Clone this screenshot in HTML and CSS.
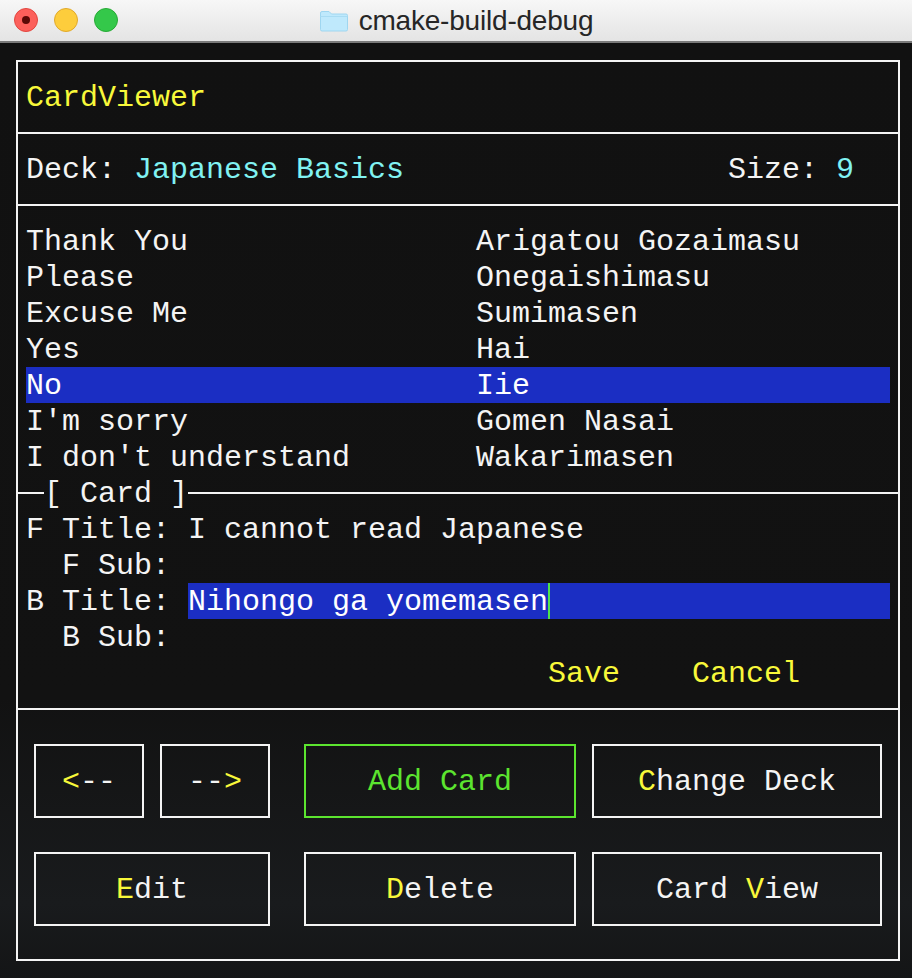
FILE: index.html
```html
<!DOCTYPE html>
<html>
<head>
<meta charset="utf-8">
<title>cmake-build-debug</title>
<link rel="stylesheet" href="styles.css">
</head>
<body>
<div class="window">
  <header class="titlebar">
    <div class="lights">
      <span class="light red"><i class="dot"></i></span>
      <span class="light yellow"></span>
      <span class="light green"></span>
    </div>
    <div class="title">
      <svg class="folder" width="30" height="22" viewBox="0 0 30 22">
        <path d="M1.5 3 Q1.5 1.5 3 1.5 H10 L12.5 4 H27 Q28.5 4 28.5 5.5 V19.5 Q28.5 21 27 21 H3 Q1.5 21 1.5 19.5 Z" fill="#bfe9fc" stroke="#9fd6f0" stroke-width="1"/>
        <path d="M1.5 6.5 H28.5" stroke="#a9dcf3" stroke-width="1"/>
      </svg>
      <span class="title-text">cmake-build-debug</span>
    </div>
  </header>
  <main class="term">
    <div class="frame">
      <section class="sec sec-title"><span class="yel">CardViewer</span></section>
      <section class="sec sec-deck">
        <span>Deck: <span class="cyan">Japanese Basics</span></span>
        <span>Size: <span class="cyan">9</span></span>
      </section>
      <section class="sec sec-list">
        <div class="item"><span class="front">Thank You</span><span>Arigatou Gozaimasu</span></div>
        <div class="item"><span class="front">Please</span><span>Onegaishimasu</span></div>
        <div class="item"><span class="front">Excuse Me</span><span>Sumimasen</span></div>
        <div class="item"><span class="front">Yes</span><span>Hai</span></div>
        <div class="item selected"><span class="front">No</span><span>Iie</span></div>
        <div class="item"><span class="front">I'm sorry</span><span>Gomen Nasai</span></div>
        <div class="item"><span class="front">I don't understand</span><span>Wakarimasen</span></div>
      </section>
      <div class="legend"><span class="rule lead"></span><span class="legend-text">[ Card ]</span><span class="rule fill"></span></div>
      <section class="sec-card">
        <div class="field"><span class="label">F Title: </span><span class="value">I cannot read Japanese</span></div>
        <div class="field"><span class="label">  F Sub: </span><span class="value"></span></div>
        <div class="field"><span class="label">B Title: </span><span class="value input"><span class="typed">Nihongo ga yomemasen</span><span class="cursor"></span></span></div>
        <div class="field"><span class="label">  B Sub: </span><span class="value"></span></div>
        <div class="actions"><span class="yel">Save</span><span class="yel">Cancel</span></div>
      </section>
      <section class="sec-buttons">
        <div class="btn b-prev"><span class="yel">&lt;</span>--</div>
        <div class="btn b-next">--<span class="yel">&gt;</span></div>
        <div class="btn b-add focused">Add Card</div>
        <div class="btn b-deck"><span class="yel">C</span>hange Deck</div>
        <div class="btn b-edit"><span class="yel">E</span>dit</div>
        <div class="btn b-del"><span class="yel">D</span>elete</div>
        <div class="btn b-view">Card <span class="yel">V</span>iew</div>
      </section>
    </div>
  </main>
</div>
</body>
</html>
```

FILE: styles.css
```css
* { box-sizing: border-box; }
html, body {
  margin: 0;
  padding: 0;
  width: 912px;
  height: 978px;
  overflow: hidden;
  background: #121212;
}
.window {
  width: 912px;
  height: 978px;
  display: flex;
  flex-direction: column;
}
.titlebar {
  height: 43px;
  flex: none;
  position: relative;
  background: linear-gradient(#f7f7f7, #e4e4e4);
  border-bottom: 2px solid #7a7a7a;
  display: flex;
  align-items: center;
}
.lights {
  display: flex;
  gap: 16px;
  padding-left: 14px;
  margin-top: -2px;
}
.light {
  width: 24px;
  height: 24px;
  border-radius: 50%;
  display: flex;
  align-items: center;
  justify-content: center;
}
.light.red { background: #fc605b; border: 1px solid #e2463f; }
.light.yellow { background: #fdcd3c; border: 1px solid #e1a92b; }
.light.green { background: #34c84a; border: 1px solid #27aa35; }
.dot {
  width: 8px;
  height: 8px;
  border-radius: 50%;
  background: #5a0906;
}
.title {
  position: absolute;
  left: 0;
  right: 0;
  top: 0;
  height: 41px;
  display: flex;
  align-items: center;
  justify-content: center;
  gap: 10px;
  pointer-events: none;
}
.folder { display: block; margin-top: 1px; }
.title-text {
  font-family: "Liberation Sans", Arial, sans-serif;
  font-size: 28px;
  color: #262626;
  letter-spacing: -0.2px;
}
.term {
  flex: 1;
  background: linear-gradient(#111111 0%, #121212 70%, #191b1d 92%, #141516 100%);
  font-family: "Liberation Mono", "Courier New", monospace;
  font-size: 30px;
  line-height: 36px;
  color: #f4f4f4;
  padding-top: 17px;
  padding-left: 16px;
}
.frame {
  width: 884px;
  border: 2px solid #f4f4f4;
}
.sec + .sec { border-top: 2px solid #f4f4f4; }
.sec-title { padding: 18px 8px 16px; height: 70px; }
.sec-deck {
  padding: 18px 44px 16px 8px;
  height: 72px;
  display: flex;
  justify-content: space-between;
}
.sec-list { padding: 17px 8px 0; height: 271px; }
.item { display: flex; height: 36px; padding-top: 1px; }
.item .front { width: 450px; flex: none; }
.item.selected { background: #1b2ec3; color: #ffffff; }
.legend {
  display: flex;
  align-items: center;
  height: 36px;
}
.legend-text { white-space: pre; padding-top: 1px; }
.rule { height: 2px; background: #f4f4f4; }
.rule.lead { width: 26px; flex: none; }
.rule.fill { flex: 1; }
.sec-card { padding: 0 8px 17px 8px; height: 197px; }
.field { display: flex; height: 36px; }
.label { flex: none; width: 162px; white-space: pre; padding-top: 1px; }
.value { flex: 1; padding-top: 1px; }
.value.input {
  background: #1b2ec3;
  color: #ffffff;
  display: flex;
  align-items: stretch;
  padding-top: 0;
}
.typed { white-space: pre; padding-top: 1px; }
.cursor {
  width: 2px;
  background: #4fe34b;
  flex: none;
}
.actions {
  display: flex;
  gap: 72px;
  padding-left: 522px;
  padding-top: 1px;
  height: 36px;
}
.sec-buttons {
  border-top: 2px solid #f4f4f4;
  padding: 34px 0 33px 16px;
  height: 251px;
  display: grid;
  grid-template-columns: 110px 16px 110px 34px 272px 16px 290px;
  grid-template-rows: 74px 74px;
  row-gap: 34px;
}
.btn {
  border: 2px solid #f4f4f4;
  display: flex;
  align-items: center;
  justify-content: center;
  height: 74px;
  white-space: pre;
  padding-top: 1px;
}
.b-prev { grid-column: 1; grid-row: 1; }
.b-next { grid-column: 3; grid-row: 1; }
.b-add { grid-column: 5; grid-row: 1; }
.b-deck { grid-column: 7; grid-row: 1; }
.b-edit { grid-column: 1 / 4; grid-row: 2; }
.b-del { grid-column: 5; grid-row: 2; }
.b-view { grid-column: 7; grid-row: 2; }
.btn.focused { border-color: #5ce52f; color: #5ce52f; }
.yel { color: #f8f83a; }
.cyan { color: #80f2f2; }
```
